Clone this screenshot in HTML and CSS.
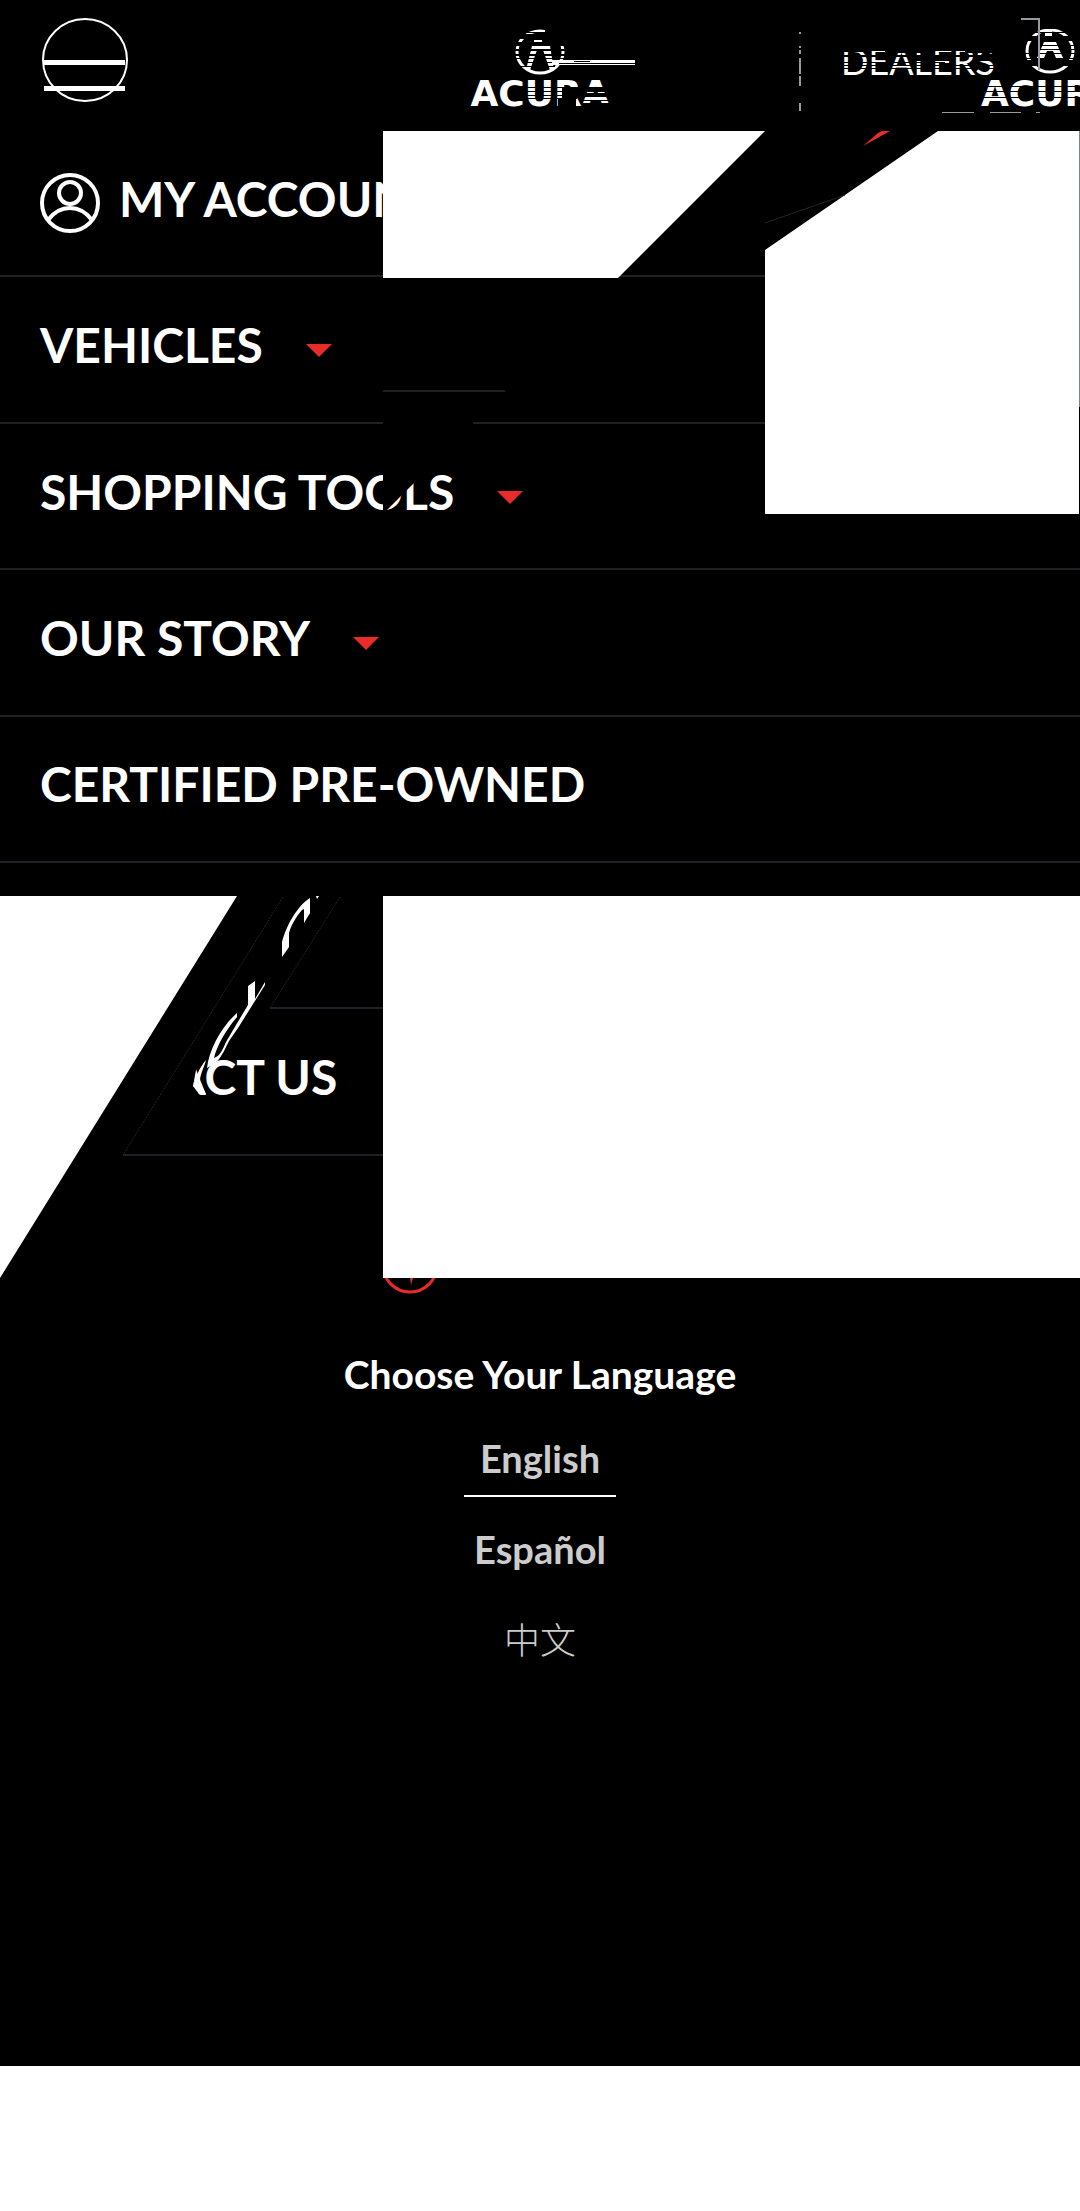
FILE: index.html
```html
<!DOCTYPE html>
<html lang="en">
<head>
<meta charset="utf-8">
<meta name="viewport" content="width=device-width, initial-scale=1">
<title>Acura</title>
<link rel="stylesheet" href="styles.css">
</head>
<body>
<div class="menu">
  <header class="header">
    <button class="toggle" type="button" aria-label="Close menu">
      <svg width="86" height="86" viewBox="42 17 86 86" aria-hidden="true">
        <ellipse cx="85" cy="60" rx="42" ry="41" fill="none" stroke="#fff" stroke-width="2"/>
        <path d="M44 60h81v5H44zM44 86h81v5H44z" fill="#fff"/>
      </svg>
    </button>
    <a class="logo" href="#" aria-label="Acura home">
      <svg class="emblem" width="50" height="46" viewBox="0 0 50 46" aria-hidden="true">
        <ellipse cx="25" cy="23" rx="23" ry="21" fill="none" stroke="#fff" stroke-width="3"/>
        <path d="M17 17h18l4 24h-4l-7-20h-6l-7 20h-4zM19 11h8v2h-8z" fill="#fff"/>
      </svg>
      <span class="wordmark">ACURA</span>
    </a>
    <a class="dealers" href="#">DEALERS</a>
    <a class="logo logo-next" href="#" aria-label="Acura">
      <svg class="emblem" width="50" height="46" viewBox="0 0 50 46" aria-hidden="true">
        <ellipse cx="25" cy="22" rx="23" ry="21" fill="none" stroke="#fff" stroke-width="3"/>
        <path d="M19 13h12l7 16h-7l-3-7h-6l-3 7h-7zM20 1h7v7h-7z" fill="#fff"/>
      </svg>
      <span class="wordmark">ACURA</span>
    </a>
    <svg class="noise" viewBox="0 0 1080 131" preserveAspectRatio="none" aria-hidden="true">
      <path d="M510 32h60v1h-60zM510 34h60v5h-60zM510 42h60v4h-60zM510 49h60v2h-60zM545 30h30v16h-30zM510 54h60v2h-60zM510 58h60v1h-60zM522 62h30v1h-30zM510 66h45v1h-45z
        M512 86h15v15h-15zM527 87h86v1h-86zM527 91h86v1h-86zM527 95h86v1h-86zM527 98h50v1h-50zM562 88h18v10h-18zM558 99h18v7h-18zM582 88h30v3h-30zM582 93h32v4h-32zM582 100h32v1h-32zM582 103h32v3h-32z
        M796 24h8v8h-8zM796 34h8v12h-8zM796 48h8v2h-8zM796 54h8v4h-8zM796 74h8v2h-8zM796 86h8v17h-8z
        M840 49h160v2h-160zM840 46h25v6h-25zM885 48h50v5h-50zM965 49h40v4h-40zM840 55h160v2h-160zM915 57h40v4h-40zM840 62h105v1h-105zM840 65h160v1h-160zM840 68h160v1h-160zM975 56h30v5h-30z
        M1020 32h60v1h-60zM1020 36h60v5h-60zM1030 45h50v1h-50zM1030 49h50v1h-50zM1020 53h60v1h-60zM1020 58h60v1h-60zM1020 60h60v6h-60zM980 86h100v1h-100zM980 91h100v1h-100zM980 97h100v1h-100z" fill="#000"/>
      <path d="M552 60h83v5h-83z" fill="#fff"/>
      <path d="M574 61h16v1h-16zM559 63h76v1h-76z" fill="#000"/>
      <path d="M1021 18h19v52h-2V20h-17zM942 112h32v1h-32zM990 112h31v1h-31zM1036 112h4v1h-4z" fill="#949ca1"/>
    </svg>
  </header>
  <nav class="nav" aria-label="Main">
    <ul class="nav-list">
      <li class="nav-item">
        <a class="nav-link" href="#">
          <svg class="avatar" width="61" height="61" viewBox="0 0 61 61" fill="none" stroke="#fff" stroke-width="4" aria-hidden="true">
            <circle cx="30" cy="30" r="28"/><circle cx="30" cy="20" r="11"/><path d="M8 47C20 31 40 31 52 47"/>
          </svg>
          MY ACCOUNT</a>
      </li>
      <li class="nav-item"><a class="nav-link has-sub" href="#">VEHICLES</a></li>
      <li class="nav-item"><a class="nav-link has-sub" href="#">SHOPPING TOOLS</a></li>
      <li class="nav-item"><a class="nav-link has-sub" href="#">OUR STORY</a></li>
      <li class="nav-item"><a class="nav-link" href="#">CERTIFIED PRE-OWNED</a></li>
      <li class="nav-item"></li>
      <li class="nav-item"><a class="nav-link" href="#">CONTACT US</a></li>
    </ul>
  </nav>
  <section class="language">
    <h2 class="language-title">Choose Your Language</h2>
    <a class="language-link is-current" href="#" lang="en">English</a>
    <a class="language-link" href="#" lang="es">Español</a>
    <a class="language-link" href="#" lang="zh">中文</a>
  </section>
  <svg class="shards" viewBox="0 0 1080 1300" preserveAspectRatio="none" aria-hidden="true">
    <path d="M765 131h315v392H765zM383 420h90v6h-90zM383 470h44l-40 40v3h-4z" fill="#000"/>
    <path d="M383 131h382L618 278H383zM938 131h141v383H765V250z" fill="#fff"/>
    <path d="M383 390h122v2H383z" fill="#1d2125"/>
    <path d="M765 223l80-28" stroke="#242424"/>
    <path d="M863 146l15-13 4-2h8z" fill="#e82c2a"/>
    <path d="M1079 131h1v276h-1z" fill="#78868a"/>
    <path d="M0 896h383v125H0zM0 1020h210v12l-14 38-3 16 7 10H0zM0 1096h123v64H0zM383 896h697v382H383z" fill="#000"/>
    <path d="M0 896h237L0 1278zM383 896h697v382H383z" fill="#fff"/>
    <path d="M283 897L123 1155M340 897L270 1008" stroke="#202326" stroke-dasharray="2 1"/>
    <path d="M270 1007h113v2H270z" fill="#1d2125"/>
    <g fill="#fff">
      <path d="M316 896h3l-2 3zM282 957v-15C286 927 296 907 310 898v15l-6 10v-14l-2 1C295 918 291 926 289 933v14zM248 986l7-5v18l10-17v3l-27 43-9 13c-4 8-7 15-13 22l-9 5c2-18 14-41 30-55v4c-12 14-20 29-23 41 6-2 9-9 12-16l10-17 12-20z"/>
      <path d="M193 1086c3-9 6-18 13-26-2 8-6 14-6 21l6 13h-7z"/>
    </g>
    <circle cx="410" cy="1265" r="27" fill="none" stroke="#e82c2a" stroke-width="3" clip-path="url(#below)"/>
    <path d="M410 1278h3l-2 7z" fill="#e82c2a"/>
    <clipPath id="below"><path d="M383 1278h60v20h-60z"/></clipPath>
  </svg>
</div>
</body>
</html>
```
FILE: styles.css
```css
* { box-sizing: border-box; }

body {
  margin: 0;
  background: #fff;
  font-family: Lato, "Noto Sans CJK SC", sans-serif;
  color: #fff;
}

a { color: inherit; text-decoration: none; }

.menu {
  position: relative;
  min-height: 2066px;
  background: #000;
  overflow: hidden;
}

.header {
  position: relative;
  display: grid;
  grid-template-columns: 1fr auto 1fr;
  align-items: start;
  height: 131px;
}

.toggle {
  justify-self: start;
  margin: 17px 0 0 42px;
  padding: 0;
  border: 0;
  background: none;
}

.toggle svg { display: block; }

.logo {
  display: flex;
  flex-direction: column;
  align-items: center;
  padding-top: 29px;
}

.emblem { display: block; }

.wordmark {
  font: bold 36px/38px "DejaVu Sans", sans-serif;
}

.logo-next {
  position: absolute;
  top: 0;
  right: -40px;
}

.dealers {
  justify-self: end;
  width: 281px;
  height: 80px;
  margin-top: 31px;
  padding-left: 40px;
  border-left: 2px solid #949ca1;
  font-size: 36px;
  line-height: 60px;
}

.noise {
  position: absolute;
  inset: 0;
  width: 100%;
  height: 131px;
}

.nav-list {
  display: grid;
  grid-auto-rows: 1fr;
  height: 1025px;
  margin: 0;
  padding: 0;
  list-style: none;
}

.nav-item {
  display: flex;
  border-bottom: 2px solid #1d2125;
}

.nav-link {
  display: flex;
  align-items: center;
  flex: 1;
  padding: 0 40px 10px;
  font-size: 48px;
  font-weight: 700;
  white-space: nowrap;
}

.avatar { margin: 10px 18px 0 0; }

.has-sub::after {
  content: "";
  margin: 12px 0 0 43px;
  border: solid transparent;
  border-width: 13px 13px 0;
  border-top-color: #e82c2a;
}

.language {
  display: flex;
  flex-direction: column;
  align-items: center;
  padding-top: 194px;
  font-size: 38px;
  line-height: 48px;
}

.language-title {
  margin: 0 0 36px;
  font-size: 39px;
  font-weight: 700;
}

.language-link {
  margin-bottom: 28px;
  padding: 0 16px 13px;
  border-bottom: 2px solid transparent;
  color: #ccc;
  font-weight: 700;
}

.language-link:lang(zh) {
  font-size: 36px;
  font-weight: 300;
}

.is-current { border-bottom-color: #fff; }

.shards {
  position: absolute;
  top: 0;
  left: 0;
  width: 100%;
  height: 1300px;
  pointer-events: none;
}
```
